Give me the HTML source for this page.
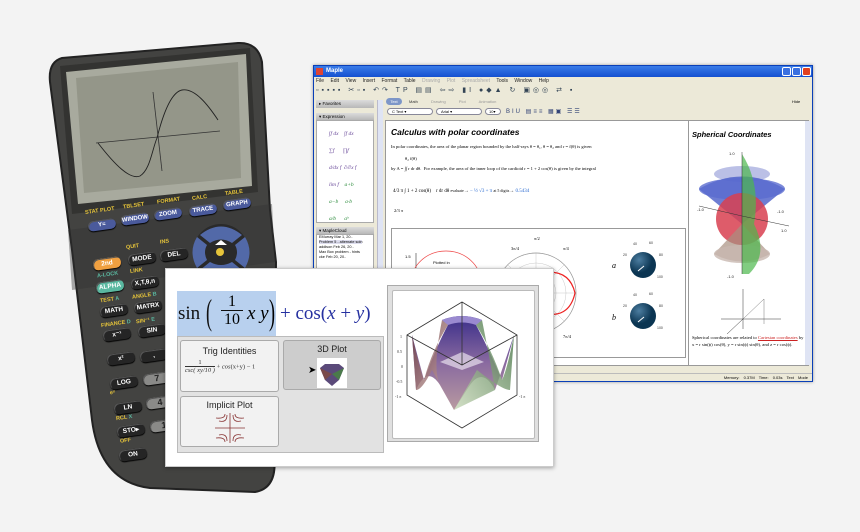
<!DOCTYPE html>
<html><head><meta charset="utf-8">
<style>
*{margin:0;padding:0;box-sizing:border-box}
body{width:860px;height:532px;background:#f3f3f3;position:relative;overflow:hidden;font-family:"Liberation Sans",sans-serif}
.a{position:absolute}
.k{position:absolute;width:28px;height:11px;border-radius:5px;background:#252525;color:#fff;font-size:6.5px;font-weight:bold;text-align:center;line-height:11px;transform:rotate(-8deg);box-shadow:1px 1px 0 #555 inset,0 1px 1px #000}
.b{background:#4a5a9c;height:10px;line-height:10px;font-size:6px}
.g{background:#8a8a88;color:#222;font-size:9px}
.lb{position:absolute;font-size:5.5px;font-weight:bold;color:#e6c43a;transform:rotate(-8deg);white-space:nowrap}
.gr{color:#5ab8a0}
.s{font-family:"Liberation Serif",serif}
</style></head><body>

<!-- Calculator -->
<svg class="a" style="left:0;top:0" width="300" height="500">
<path d="M62,58 Q48,62 50,82 L72,250 L92,420 Q100,482 150,488 L255,492 Q278,488 274,455 L276,262 L270,210 L262,62 Q258,42 238,43 Z" fill="#434341" stroke="#222" stroke-width="2"/>
<path d="M60,66 L250,48 L258,192 L72,214 Z" fill="#333331"/>
<path d="M66,72 L246,54 L252,186 L78,204 Z" fill="#a8aa9e"/>
<path d="M76,78 L238,62 L241,178 L84,193 Z" fill="#949689"/>
<line x1="96" y1="143" x2="220" y2="131" stroke="#333" stroke-width="0.8"/>
<line x1="153" y1="92" x2="162" y2="171" stroke="#333" stroke-width="0.8"/>
<path d="M98,143 C115,165 130,180 140,176 C150,170 152,150 157,138 C164,110 172,92 182,90 C195,88 208,105 218,120" fill="none" stroke="#222" stroke-width="0.9"/>
<path d="M68,230 L272,204 L275,262 L72,290 Z" fill="#333331" opacity=".4"/>
<circle cx="221" cy="252" r="28" fill="#2a2a2a"/>
<path d="M200,235 Q221,218 242,235 L232,243 Q221,236 210,243 Z" fill="#5269a8"/>
<path d="M200,270 Q221,287 242,270 L232,262 Q221,268 210,262 Z" fill="#5269a8"/>
<path d="M197,237 Q188,252 197,268 L207,260 Q203,252 207,245 Z" fill="#5269a8"/>
<path d="M245,237 Q254,252 245,268 L235,260 Q239,252 235,245 Z" fill="#5269a8"/>
<circle cx="220" cy="252" r="4" fill="#e6c43a"/>
<path d="M215,245 L221,240 L227,245 Z" fill="#fff"/>
</svg>
<div class="k b" style="left:88px;top:220px">Y=</div>
<div class="k b" style="left:121px;top:214px">WINDOW</div>
<div class="k b" style="left:154px;top:209px">ZOOM</div>
<div class="k b" style="left:189px;top:205px">TRACE</div>
<div class="k b" style="left:223px;top:199px">GRAPH</div>
<div class="lb" style="left:85px;top:208px">STAT PLOT</div>
<div class="lb" style="left:123px;top:203px">TBLSET</div>
<div class="lb" style="left:157px;top:198px">FORMAT</div>
<div class="lb" style="left:192px;top:195px">CALC</div>
<div class="lb" style="left:225px;top:190px">TABLE</div>
<div class="k" style="left:93px;top:258px;background:#f0a040;color:#fff">2nd</div>
<div class="k" style="left:128px;top:253px">MODE</div>
<div class="k" style="left:160px;top:249px">DEL</div>
<div class="k" style="left:96px;top:281px;background:#5ab8a0">ALPHA</div>
<div class="k" style="left:131px;top:277px">X,T,θ,n</div>
<div class="k" style="left:100px;top:305px">MATH</div>
<div class="k" style="left:134px;top:301px">MATRX</div>
<div class="k" style="left:103px;top:329px">x⁻¹</div>
<div class="k" style="left:138px;top:325px">SIN</div>
<div class="k" style="left:107px;top:353px">x²</div>
<div class="k" style="left:140px;top:350px">,</div>
<div class="k" style="left:110px;top:377px">LOG</div>
<div class="k g" style="left:143px;top:373px">7</div>
<div class="k" style="left:114px;top:402px">LN</div>
<div class="k g" style="left:146px;top:397px">4</div>
<div class="k" style="left:117px;top:425px">STO▸</div>
<div class="k g" style="left:150px;top:420px">1</div>
<div class="k" style="left:119px;top:449px">ON</div>
<div class="lb" style="left:126px;top:244px">QUIT</div>
<div class="lb" style="left:160px;top:239px">INS</div>
<div class="lb gr" style="left:97px;top:272px">A-LOCK</div>
<div class="lb" style="left:130px;top:268px">LINK</div>
<div class="lb" style="left:100px;top:297px">TEST <span class="gr">A</span></div>
<div class="lb" style="left:132px;top:293px">ANGLE <span class="gr">B</span></div>
<div class="lb" style="left:101px;top:321px">FINANCE <span class="gr">D</span></div>
<div class="lb" style="left:136px;top:318px">SIN⁻¹ <span class="gr">E</span></div>
<div class="lb" style="left:110px;top:390px">eˣ</div>
<div class="lb" style="left:116px;top:415px">RCL <span class="gr">X</span></div>
<div class="lb" style="left:120px;top:438px">OFF</div>

<!-- Maple window -->
<div class="a" style="left:313px;top:65px;width:500px;height:317px;background:#ece9d8;border:1px solid #0a3fb8;box-shadow:0 0 3px #999">
 <div class="a" style="left:0;top:0;width:498px;height:11px;background:linear-gradient(#3a7ce8,#1450d0);color:#fff;font-size:6px;font-weight:bold;line-height:11px;padding-left:12px">Maple
  <div class="a" style="left:2px;top:2px;width:7px;height:7px;background:#d43"></div>
  <div class="a" style="right:1px;top:1px;width:9px;height:9px;background:#e04020;border:1px solid #fff;border-radius:2px"></div>
  <div class="a" style="right:11px;top:1px;width:9px;height:9px;background:#3a70e0;border:1px solid #fff;border-radius:2px"></div>
  <div class="a" style="right:21px;top:1px;width:9px;height:9px;background:#3a70e0;border:1px solid #fff;border-radius:2px"></div>
 </div>
 <div class="a" style="left:2px;top:12px;font-size:5px;color:#222;word-spacing:5px;white-space:nowrap">File Edit View Insert Format Table <span style="color:#aaa">Drawing Plot Spreadsheet</span> Tools Window Help</div>
 <div class="a" style="left:2px;top:20px;width:270px;height:10px;font-size:7px;color:#345;letter-spacing:3px;white-space:nowrap;overflow:hidden">▫▪▪▪▪ ✂▫▪ ↶↷ TP ▤▤ ⇦⇨ ▮I ●◆▲ ↻ ▣◎◎ ⇄ ▪</div>
 <div class="a" style="left:2px;top:34px;width:58px;height:8px;background:linear-gradient(#dcdcdc,#b8b8b8);font-size:4.5px;line-height:8px;padding-left:3px">▸ Favorites</div>
 <div class="a" style="left:2px;top:47px;width:58px;height:7px;background:linear-gradient(#dcdcdc,#b8b8b8);font-size:4.5px;line-height:7px;padding-left:3px">▾ Expression</div>
 <div class="a s" style="left:2px;top:54px;width:58px;height:103px;background:#fff;border:1px solid #aaa;font-size:5.5px;color:#6a4a9a;line-height:17px;padding:5px 0 0 12px;font-style:italic;white-space:nowrap">∫f dx &nbsp;&nbsp;&nbsp;∫f dx<br>∑f &nbsp;&nbsp;&nbsp;&nbsp;&nbsp;∏f<br>d/dx f &nbsp;∂/∂x f<br>lim f &nbsp;&nbsp;&nbsp;<span style="color:#2a8a3a">a+b</span><br><span style="color:#2a8a3a">a−b &nbsp;&nbsp;&nbsp;&nbsp;a·b</span><br><span style="color:#2a8a3a">a/b &nbsp;&nbsp;&nbsp;&nbsp;&nbsp;aᵇ</span></div>
 <div class="a" style="left:2px;top:161px;width:58px;height:7px;background:linear-gradient(#dcdcdc,#b8b8b8);font-size:4.5px;line-height:7px;padding-left:3px">▾ MapleCloud</div>
 <div class="a" style="left:2px;top:168px;width:58px;height:40px;background:#fff;border:1px solid #aaa;font-size:3.8px;line-height:5px;padding-left:2px;white-space:nowrap;overflow:hidden">EMurray Mar 1, 20..<br><span style="background:#dde">Problem 5 - alternate soln</span><br>addison Feb 26, 20..<br>Max Box problem - hints<br>cke Feb 20, 20..</div>
 <div class="a" style="left:63px;top:34px;width:6px;height:170px;background:#dfe4f4;border-left:1px solid #bbc"></div>
 <div class="a" style="left:72px;top:32px;width:16px;height:7px;border-radius:4px;background:#7d96c8;color:#fff;font-size:4px;text-align:center;line-height:7px">Text</div>
 <div class="a" style="left:95px;top:33px;font-size:4px;color:#333;word-spacing:12px">Math <span style="color:#999">Drawing Plot Animation</span></div>
 <div class="a" style="left:478px;top:33px;font-size:4px">Hide</div>
 <div class="a" style="left:73px;top:42px;width:46px;height:7px;border:1px solid #889;border-radius:4px;background:#fff;font-size:4px;line-height:6px;padding-left:4px">C Text ▾</div>
 <div class="a" style="left:122px;top:42px;width:46px;height:7px;border:1px solid #889;border-radius:4px;background:#fff;font-size:4px;line-height:6px;padding-left:4px">Arial ▾</div>
 <div class="a" style="left:171px;top:42px;width:16px;height:7px;border:1px solid #889;border-radius:4px;background:#fff;font-size:4px;line-height:6px;padding-left:3px">10▾</div>
 <div class="a" style="left:192px;top:42px;font-size:6px;color:#347;letter-spacing:2px">BIU ▤≡≡ ▦▣ ☰☰</div>
 <div class="a" style="left:71px;top:54px;width:424px;height:246px;background:#fff;border:1px solid #999"></div>
 <div class="a" style="left:374px;top:54px;width:1px;height:246px;background:#999"></div>
 <div class="a" style="left:491px;top:55px;width:6px;height:244px;background:#dfe4f4"></div>
 <div class="a" style="left:77px;top:61px;font-size:8.5px;font-weight:bold;font-style:italic">Calculus with polar coordinates</div>
 <div class="a s" style="left:77px;top:78px;font-size:4.6px;white-space:nowrap">In polar coordinates, the area of the planar region bounded by the half-rays θ = θ₁, θ = θ₂ and r = f(θ) is given</div>
 <div class="a s" style="left:77px;top:100px;font-size:4.6px;white-space:nowrap">by A = ∫∫ r dr dθ. &nbsp;For example, the area of the inner loop of the cardioid r = 1 + 2 cos(θ) is given by the integral</div>
 <div class="a s" style="left:77px;top:90px;font-size:4.6px;margin-left:14px">θ₂ f(θ)</div>
 <div class="a s" style="left:79px;top:122px;font-size:5px;white-space:nowrap">4/3 π ∫ 1 + 2 cos(θ) &nbsp;&nbsp;&nbsp;r dr dθ <span style="font-size:4px">evaluate</span>→ <span style="color:#2a6ad0">− ½ √3 + π</span> <span style="font-size:4px">at 5 digits</span>→ <span style="color:#2a6ad0">0.5434</span></div>
 <div class="a s" style="left:80px;top:142px;font-size:4.5px">2/3 π</div>
 <div class="a" style="left:77px;top:162px;width:295px;height:130px;border:1px solid #999;background:#fff"></div>
 <svg class="a" style="left:77px;top:162px" width="295" height="130">
  <line x1="25" y1="25" x2="25" y2="100" stroke="#333" stroke-width=".6"/>
  <ellipse cx="55" cy="55" rx="35" ry="32" fill="none" stroke="#e44" stroke-width=".7"/>
  <text x="42" y="36" font-size="4" font-family="Liberation Sans">Plotted in</text>
  <text x="14" y="30" font-size="4">1.5</text>
  <g fill="none" stroke="#bbb" stroke-width=".4">
   <circle cx="145" cy="65" r="40"/><circle cx="145" cy="65" r="30"/><circle cx="145" cy="65" r="20"/><circle cx="145" cy="65" r="10"/>
   <line x1="105" y1="65" x2="185" y2="65"/><line x1="145" y1="25" x2="145" y2="105"/><line x1="117" y1="37" x2="173" y2="93"/><line x1="117" y1="93" x2="173" y2="37"/>
  </g>
  <circle cx="145" cy="65" r="40" fill="none" stroke="#999" stroke-width=".7"/>
  <path d="M150,45 Q178,40 184,65 Q178,92 150,85" fill="none" stroke="#e22" stroke-width="1.2"/>
  <path d="M150,60 Q155,65 150,70" fill="none" stroke="#e22" stroke-width="1"/>
  <text x="120" y="22" font-size="4.5" font-family="Liberation Serif">3π/4</text>
  <text x="143" y="12" font-size="4.5" font-family="Liberation Serif">π/2</text>
  <text x="172" y="22" font-size="4.5" font-family="Liberation Serif">π/4</text>
  <text x="172" y="110" font-size="4.5" font-family="Liberation Serif">7π/4</text>
  <text x="221" y="40" font-size="8" font-style="italic" font-family="Liberation Serif">a</text>
  <text x="221" y="92" font-size="8" font-style="italic" font-family="Liberation Serif">b</text>
  <defs><radialGradient id="kn" cx=".35" cy=".3"><stop offset="0" stop-color="#4c7da0"/><stop offset="1" stop-color="#0b3552"/></radialGradient></defs>
  <circle cx="252" cy="37" r="13" fill="url(#kn)"/><line x1="247" y1="43" x2="253" y2="38" stroke="#fff"/>
  <circle cx="252" cy="88" r="13" fill="url(#kn)"/><line x1="247" y1="94" x2="253" y2="89" stroke="#fff"/>
  <g font-size="3.5" fill="#333"><text x="232" y="28">20</text><text x="242" y="17">40</text><text x="258" y="16">60</text><text x="268" y="28">80</text><text x="266" y="50">100</text>
  <text x="232" y="79">20</text><text x="242" y="68">40</text><text x="258" y="67">60</text><text x="268" y="79">80</text><text x="266" y="101">100</text></g>
 </svg>
 <div class="a" style="left:378px;top:64px;font-size:7.5px;font-weight:bold;font-style:italic">Spherical Coordinates</div>
 <svg class="a" style="left:375px;top:78px" width="118" height="190">
  <ellipse cx="53" cy="30" rx="28" ry="8" fill="#aab0e0" opacity=".8"/>
  <path d="M10,45 Q53,20 96,45 L53,80 Z" fill="#4a5cc8" opacity=".8"/>
  <ellipse cx="53" cy="45" rx="43" ry="11" fill="#5a6cd0" opacity=".8"/>
  <circle cx="53" cy="75" r="26" fill="#d84050" opacity=".85"/>
  <path d="M53,80 L25,110 Q53,125 81,110 Z" fill="#a89080" opacity=".7"/>
  <ellipse cx="53" cy="110" rx="28" ry="9" fill="#c8b8b0" opacity=".8"/>
  <path d="M53,10 Q72,40 65,80 Q80,110 60,130 L53,130 Z" fill="#4cb84c" opacity=".7"/>
  <line x1="53" y1="8" x2="53" y2="130" stroke="#333" stroke-width=".5"/>
  <line x1="10" y1="62" x2="53" y2="72" stroke="#333" stroke-width=".5"/>
  <line x1="53" y1="72" x2="100" y2="82" stroke="#333" stroke-width=".5"/>
  <g font-size="4" fill="#222"><text x="40" y="11">1.0</text><text x="8" y="67">-1.0</text><text x="88" y="69">-1.0</text><text x="92" y="88">1.0</text><text x="38" y="134">-1.0</text></g>
  <line x1="54" y1="145" x2="54" y2="185" stroke="#333" stroke-width=".5"/>
  <line x1="32" y1="175" x2="92" y2="175" stroke="#333" stroke-width=".5"/>
  <line x1="54" y1="175" x2="38" y2="190" stroke="#333" stroke-width=".5"/>
  <path d="M54,175 L75,155 L75,180" fill="none" stroke="#555" stroke-width=".4"/>
 </svg>
 <div class="a s" style="left:378px;top:268px;font-size:4.6px;line-height:7px;width:112px">Spherical coordinates are related to <span style="color:#c22;text-decoration:underline">Cartesian coordinates</span> by x = r sin(ϕ) cos(θ), y = r sin(ϕ) sin(θ), and z = r cos(ϕ).</div>
 <div class="a" style="left:0;top:307px;width:498px;height:8px;background:#ece9d8;border-top:1px solid #bbb;font-size:4px;line-height:8px;text-align:right;padding-right:4px;word-spacing:3px">Memory: 0.37M Time: 0.03s Text Mode</div>
</div>

<!-- overlay panel -->
<div class="a" style="left:165px;top:268px;width:389px;height:199px;background:#fff;border:1px solid #ccc;box-shadow:0 1px 4px rgba(0,0,0,.35)">
 <div class="a" style="left:11px;top:22px;width:99px;height:45px;background:#b8d0ee"></div>
 <div class="a s" style="left:12px;top:34px;font-size:19px;color:#111">sin</div>
 <div class="a s" style="left:40px;top:22px;font-size:36px;color:#111;transform:scaleX(.5);transform-origin:left">(</div>
 <div class="a s" style="left:55px;top:24px;font-size:16px;text-align:center;width:22px;line-height:17px">1<div style="border-top:1px solid #111">10</div></div>
 <div class="a s" style="left:81px;top:34px;font-size:19px;font-style:italic">x y</div>
 <div class="a s" style="left:103px;top:22px;font-size:36px;transform:scaleX(.5);transform-origin:left">)</div>
 <div class="a s" style="left:114px;top:34px;font-size:19px;color:#2530a0;white-space:nowrap">+ cos(<i>x</i> + <i>y</i>)</div>
 <div class="a" style="left:11px;top:67px;width:207px;height:117px;background:#e2e2e2;border:1px solid #bbb"></div>
 <div class="a" style="left:14px;top:71px;width:99px;height:52px;background:#f2f2f2;border:1px solid #aaa;border-radius:3px">
  <div style="font-size:9px;text-align:center;margin-top:5px;color:#222">Trig Identities</div>
  <div class="s" style="font-size:6.5px;margin:3px 0 0 4px;white-space:nowrap;color:#333"><span style="display:inline-block;text-align:center;vertical-align:middle;line-height:8px">1<br><span style="border-top:1px solid #333;font-style:italic">csc( xy/10 )</span></span> + <i>cos</i>(x+y) − 1</div>
 </div>
 <div class="a" style="left:117px;top:71px;width:98px;height:50px;background:#cdcdcd;border:1px solid #aaa;border-radius:3px">
  <div style="font-size:9px;text-align:center;margin-top:3px;color:#222">3D Plot</div>
  <div class="a" style="left:33px;top:17px;width:30px;height:30px;background:#fff"><svg width="30" height="30"><path d="M3,10 L8,6 L22,6 L27,10 L22,22 L15,28 L8,22 Z" fill="#5b4a7a"/><path d="M3,10 L8,22 L15,16 Z" fill="#7a4a4a"/><path d="M27,10 L22,22 L15,16 Z" fill="#4a7a4a"/></svg></div>
  <div class="a" style="left:24px;top:24px;font-size:10px">➤</div>
 </div>
 <div class="a" style="left:14px;top:127px;width:99px;height:51px;background:#f2f2f2;border:1px solid #aaa;border-radius:3px">
  <div style="font-size:9px;text-align:center;margin-top:3px;color:#222">Implicit Plot</div>
  <svg class="a" style="left:34px;top:16px" width="30" height="30"><g fill="none" stroke="#833" stroke-width=".8"><line x1="15" y1="0" x2="15" y2="30"/><line x1="0" y1="15" x2="30" y2="15"/><path d="M1,5 Q10,6 10,1 M4,8 Q12,10 12,2 M29,5 Q20,6 20,1 M26,8 Q18,10 18,2 M1,25 Q10,24 10,29 M4,22 Q12,20 12,28 M29,25 Q20,24 20,29 M26,22 Q18,20 18,28"/></g></svg>
 </div>
 <div class="a" style="left:221px;top:16px;width:152px;height:157px;background:#e0e0e0;border:1px solid #aaa"></div>
 <div class="a" style="left:226px;top:21px;width:143px;height:149px;background:#fff;border:1px solid #bbb;border-radius:2px"></div>
 <svg class="a" style="left:226px;top:21px" width="143" height="149">
  <defs>
   <linearGradient id="g1" x1="0" y1="0" x2="0" y2="1"><stop offset="0" stop-color="#3a2e8a"/><stop offset=".5" stop-color="#8a6aa0"/><stop offset="1" stop-color="#b89aa0"/></linearGradient>
   <linearGradient id="g2" x1="0" y1="0" x2="1" y2="1"><stop offset="0" stop-color="#6a3a3a"/><stop offset="1" stop-color="#d8b8b8"/></linearGradient>
   <linearGradient id="g3" x1="1" y1="0" x2="0" y2="1"><stop offset="0" stop-color="#3a6a3a"/><stop offset="1" stop-color="#c8d8b8"/></linearGradient>
  </defs>
  <path d="M20,45 L24,100 Q35,75 48,95 L62,120 L76,98 Q90,75 103,100 L122,45 L110,90 Q95,55 84,35 L90,30 Q70,22 50,30 L56,35 Q45,55 32,90 Z" fill="url(#g1)"/>
  <path d="M20,45 Q28,80 32,90 Q40,60 56,35 L50,30 Q40,80 48,95 L62,120 L40,80 Q30,100 24,100 Z" fill="url(#g2)" opacity=".8"/>
  <path d="M122,45 Q115,80 110,90 Q100,60 84,35 L90,30 Q100,80 103,100 L62,120 L85,80 Q110,100 118,100 Z" fill="url(#g3)" opacity=".8"/>
  <path d="M50,30 Q70,22 90,30 L84,35 Q70,30 56,35 Z" fill="#9a8ad0"/>
  <path d="M48,72 L70,80 L92,72 L70,62 Z" fill="#e8e0ec" opacity=".7"/>
  <g fill="none" stroke="#333" stroke-width=".8">
   <path d="M15,45 L70,12 L125,45 L125,105 L70,138 L15,105 Z"/>
   <path d="M70,12 L70,75 M15,45 L70,75 L125,45"/>
  </g>
  <g font-size="4" fill="#333" font-family="Liberation Serif"><text x="8" y="48">1</text><text x="5" y="63">0.5</text><text x="9" y="78">0</text><text x="4" y="93">-0.5</text><text x="3" y="108">-1 π</text><text x="127" y="108">-1 π</text></g>
 </svg>
</div>
</body></html>
